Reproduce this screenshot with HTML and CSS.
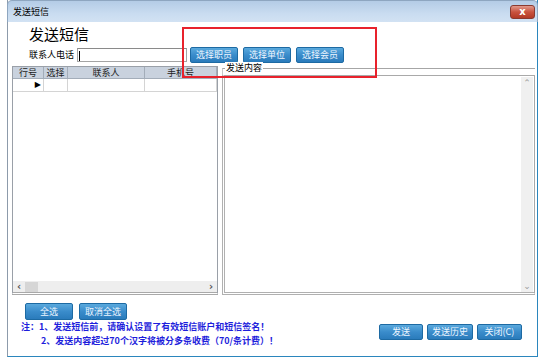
FILE: index.html
```html
<!DOCTYPE html>
<html lang="zh-CN">
<head>
    <meta charset="UTF-8">
    <meta name="viewport" content="width=device-width, initial-scale=1.0">
    <title>发送短信</title>
    <link rel="stylesheet" href="styles.css">
</head>
<body>
    <div class="window">
        <div class="titlebar">
            <span class="title-text">发送短信</span>
            <span class="close-btn">x</span>
        </div>

        <div class="content">
            <h1 class="heading">发送短信</h1>
            <div class="contact-row">
                <label class="contact-label" for="phone">联系人电话</label>
                <div class="phone-input" id="phone"><span class="caret"></span></div>
                <div class="pick-buttons">
                    <button class="btn">选择职员</button>
                    <button class="btn">选择单位</button>
                    <button class="btn">选择会员</button>
                </div>
            </div>

            <div class="panes">
                <div class="grid-pane">
                    <div class="grid">
                        <div class="grid-head">行号</div>
                        <div class="grid-head">选择</div>
                        <div class="grid-head">联系人</div>
                        <div class="grid-head">手机号</div>
                        <div class="grid-cell marker">&#9654;</div>
                        <div class="grid-cell"></div>
                        <div class="grid-cell"></div>
                        <div class="grid-cell"></div>
                    </div>
                    <div class="hscroll">
                        <span class="arrow">&lsaquo;</span>
                        <span class="hthumb"></span>
                        <span class="hspace"></span>
                        <span class="arrow">&rsaquo;</span>
                    </div>
                </div>
                <div class="splitter"></div>
                <div class="message-pane">
                    <div class="group-line"><span class="group-label">发送内容</span></div>
                    <div class="message-box">
                        <div class="message-text"></div>
                        <div class="vscroll">
                            <span class="varrow">&#8963;</span>
                            <span class="varrow">&#8964;</span>
                        </div>
                    </div>
                </div>
            </div>

            <div class="footer">
                <div class="footer-left">
                    <div class="select-buttons">
                        <button class="btn btn-tall">全选</button>
                        <button class="btn btn-tall">取消全选</button>
                    </div>
                    <p class="note">注：1、发送短信前，请确认设置了有效短信账户和短信签名！</p>
                    <p class="note note-indent">2、发送内容超过70个汉字将被分多条收费（70/条计费）！</p>
                </div>
                <div class="action-buttons">
                    <button class="btn btn-send">发送</button>
                    <button class="btn btn-history">发送历史</button>
                    <button class="btn btn-close">关闭(C)</button>
                </div>
            </div>
        </div>

        <div class="highlight"></div>
    </div>
</body>
</html>
```

FILE: styles.css
```css
* {
    box-sizing: border-box;
}

body {
    margin: 0;
    background-color: #ffffff;
    font-family: "Noto Sans CJK SC", "Noto Sans", sans-serif;
    font-size: 9px;
    color: #000;
}

.window {
    position: relative;
    margin-left: 7px;
    width: 531px;
    height: 357px;
    border-left: 1px solid #8d9bab;
    border-right: 1px solid #2b86bd;
    border-bottom: 1px solid #2b86bd;
    background-color: #fff;
}

.titlebar {
    height: 22px;
    margin-left: -1px;
    margin-right: -1px;
    display: flex;
    align-items: center;
    justify-content: space-between;
    padding: 0 2px 0 5px;
    background: linear-gradient(#b4cce6, #c9dcf0 60%, #d2e2f3);
    border: 1px solid #8ea6c0;
    border-bottom: none;
    border-radius: 5px 5px 0 0;
}

.title-text {
    line-height: 12px;
}

.close-btn {
    width: 25px;
    height: 14px;
    border-radius: 3px;
    border: 1px solid #8a3a30;
    background: linear-gradient(#e19a8c, #c9533f 50%, #b33a26);
    color: #fff;
    font-family: "DejaVu Sans", sans-serif;
    font-weight: bold;
    font-size: 10px;
    line-height: 11px;
    text-align: center;
}

.content {
    display: flex;
    flex-direction: column;
}

.heading {
    margin: 3px 0 0 21px;
    font-size: 15px;
    font-weight: normal;
    line-height: 18px;
}

.contact-row {
    display: flex;
    align-items: center;
    height: 16px;
    margin-top: 4px;
    padding-left: 21px;
}

.contact-label {
    width: 48px;
    line-height: 12px;
}

.phone-input {
    width: 110px;
    height: 14px;
    border: 1px solid #a4a4a4;
    border-top-color: #8a8a8a;
    padding: 2px 1px;
}

.caret {
    display: block;
    width: 1px;
    height: 10px;
    background-color: #000;
}

.pick-buttons {
    display: flex;
    gap: 5px;
    margin-left: 3px;
}

.btn {
    width: 48px;
    height: 16px;
    padding: 0;
    border: 1px solid #1d6aa3;
    border-radius: 2px;
    background: linear-gradient(#5aa9dd, #3a8ccb 50%, #2a7bbb);
    color: #eef6ff;
    font-family: "Noto Sans CJK SC", sans-serif;
    font-size: 9px;
    line-height: 12px;
}

.btn-tall {
    height: 17px;
}

.panes {
    display: flex;
    height: 229px;
    margin-top: 3px;
    padding-left: 4px;
}

.grid-pane {
    width: 206px;
    display: flex;
    flex-direction: column;
    border: 1px solid #9aa0a8;
    border-bottom: 3px double #a9a9a9;
}

.grid {
    flex: 1;
    display: grid;
    grid-template-columns: 31px 24px 77px 72px;
    grid-template-rows: 12px 13px;
    align-content: start;
    overflow: hidden;
}

.grid-head {
    background-color: #c9d2de;
    border-right: 1px solid #a3adb9;
    border-bottom: 1px solid #a3adb9;
    text-align: center;
    line-height: 11px;
    color: #222;
}

.grid-cell {
    border-right: 1px solid #d4d4d4;
    border-bottom: 1px solid #d4d4d4;
}

.marker {
    text-align: right;
    padding-right: 2px;
    font-size: 8px;
    line-height: 12px;
    font-family: "DejaVu Sans", sans-serif;
}

.hscroll {
    display: flex;
    align-items: center;
    height: 11px;
    background-color: #eeeeee;
    color: #555;
}

.arrow {
    width: 12px;
    text-align: center;
    font-family: "DejaVu Sans", sans-serif;
    font-size: 10px;
    font-weight: bold;
    line-height: 10px;
}

.hthumb {
    width: 13px;
    height: 10px;
    background-color: #d6d6d6;
}

.hspace {
    flex: 1;
}

.splitter {
    width: 4px;
}

.message-pane {
    width: 313px;
    display: flex;
    flex-direction: column;
}

.group-line {
    position: relative;
    height: 7px;
    margin-top: 2px;
    border-top: 1px solid #a6a6a6;
    border-left: 1px solid #c8c8c8;
}

.group-label {
    position: absolute;
    left: 2px;
    top: -7px;
    padding: 0 1px;
    background-color: #fff;
    line-height: 12px;
}

.message-box {
    flex: 1;
    display: flex;
    border: 1px solid #a9a9a9;
    border-left: 3px double #b0b0b0;
    border-bottom: 3px double #b0b0b0;
    padding: 1px 1px 0 0;
}

.message-text {
    flex: 1;
}

.vscroll {
    width: 12px;
    display: flex;
    flex-direction: column;
    justify-content: space-between;
    background-color: #f0f0f0;
    color: #9a9a9a;
}

.varrow {
    text-align: center;
    font-family: "DejaVu Sans", sans-serif;
    font-size: 9px;
    line-height: 12px;
}

.footer {
    display: flex;
    justify-content: space-between;
    align-items: flex-end;
    padding: 8px 15px 0 13px;
}

.select-buttons {
    display: flex;
    gap: 6px;
    margin-left: 4px;
}

.note {
    margin: 0;
    line-height: 14px;
    color: #1e1edc;
    font-weight: bold;
    white-space: nowrap;
}

.note-indent {
    padding-left: 20px;
}

.action-buttons {
    display: flex;
    gap: 4px;
    margin-bottom: 8px;
}

.btn-send {
    width: 44px;
}

.btn-history {
    width: 46px;
}

.btn-close {
    width: 45px;
}

.highlight {
    position: absolute;
    left: 174px;
    top: 27px;
    width: 195px;
    height: 51px;
    border: 2px solid #e8222c;
}
```
